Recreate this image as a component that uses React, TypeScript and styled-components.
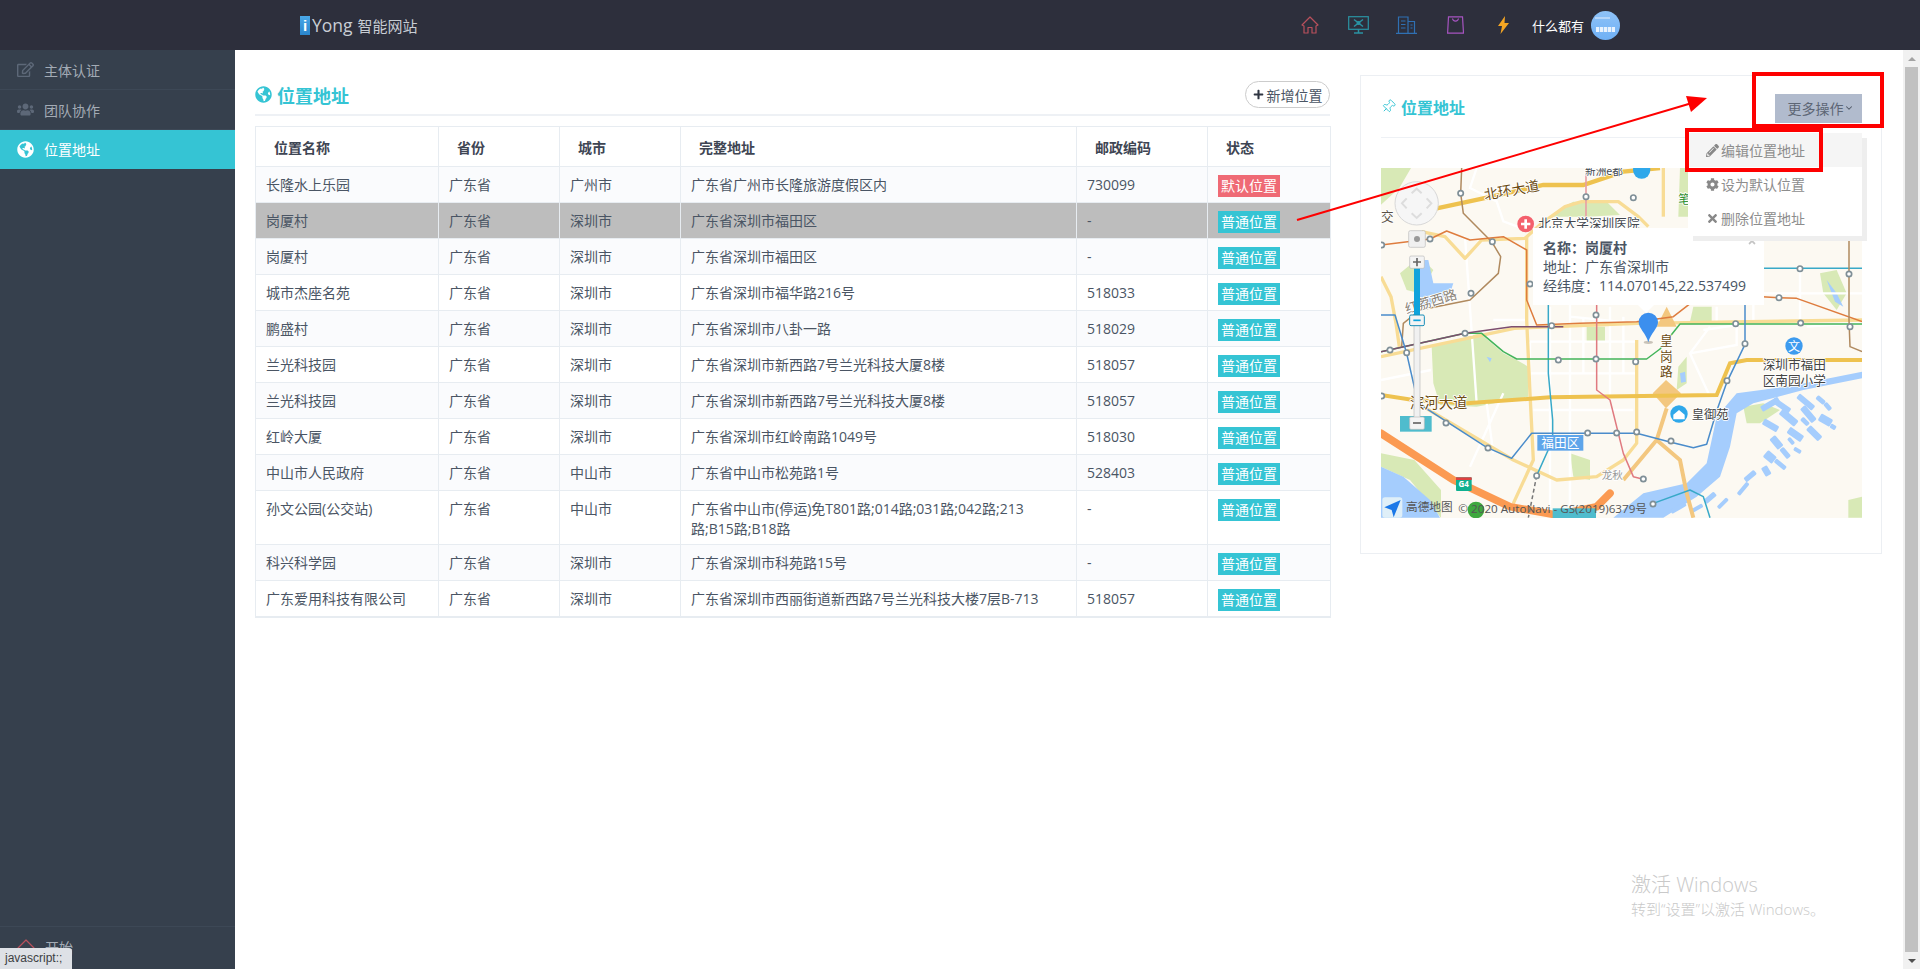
import React from "react";
import styled, { createGlobalStyle } from "styled-components";
import { FaGlobeAmericas, FaPlus, FaPencilAlt, FaCog, FaTimes, FaRegEdit, FaUsers } from "react-icons/fa";
import { Pin, ChevronDown } from "lucide-react";

const FONT = `"Open Sans", "Noto Sans CJK SC", sans-serif`;
const TEAL = "#35c4d4";

const Global = createGlobalStyle`
  html, body { margin: 0; padding: 0; height: 100%; overflow: hidden; background: #fff; }
  body { font-family: ${FONT}; font-size: 14px; color: #4a5564; }
  * { box-sizing: border-box; }
`;

const Page = styled.div`
  position: relative;
  width: 1920px;
  height: 969px;
  display: flex;
  flex-direction: column;
  overflow: hidden;
`;

/* header */
const TopBar = styled.header`
  height: 50px;
  flex: none;
  background: #2d2f3c;
  display: flex;
  align-items: center;
  padding: 0 300px;
`;
const Logo = styled.div`
  display: flex;
  align-items: center;
  color: #c8cdd4;
`;
const LogoMark = styled.span`
  width: 10px;
  height: 19px;
  margin-right: 2px;
  background: linear-gradient(#4aa8e8, #2a85cc);
  color: #fff;
  font: 700 15px/19px "Liberation Sans", sans-serif;
  text-align: center;
`;
const LogoWord = styled.span`
  font-size: 17.5px;
  margin-right: 5px;
`;
const LogoName = styled.span`
  font-size: 15px;
`;
const TopRight = styled.div`
  margin-left: auto;
  display: flex;
  align-items: center;
`;
const TopIcon = styled.span`
  width: 48.5px;
  height: 50px;
  display: flex;
  align-items: center;
  justify-content: center;
`;
const UserName = styled.span`
  margin-left: 4px;
  width: 52px;
  font-size: 13px;
  color: #fff;
  white-space: nowrap;
`;
const Avatar = styled.span`
  position: relative;
  margin-left: 7px;
  width: 29px;
  height: 29px;
  border-radius: 50%;
  background: linear-gradient(#8ec2f7, #6fb0f5);
  overflow: hidden;
  &::before {
    content: "";
    position: absolute;
    left: 4px;
    top: 6px;
    width: 15px;
    height: 2px;
    background: #b5d6fa;
  }
  &::after {
    content: "";
    position: absolute;
    left: 5px;
    top: 16px;
    width: 19px;
    height: 5px;
    background: repeating-linear-gradient(90deg, #e8f2fd 0 3px, #9cc8f7 3px 4px);
  }
`;

/* body */
const Body = styled.div`
  flex: 1;
  min-height: 0;
  display: flex;
`;
const Sidebar = styled.nav`
  width: 235px;
  flex: none;
  background: #36404d;
  display: flex;
  flex-direction: column;
`;
const NavItem = styled.a<{ $active?: boolean; $h?: number }>`
  height: ${(p) => p.$h ?? 40}px;
  display: flex;
  align-items: center;
  padding-left: 17px;
  font-size: 14px;
  color: ${(p) => (p.$active ? "#fff" : "#a3abb5")};
  background: ${(p) => (p.$active ? TEAL : "transparent")};
  border-bottom: 1px solid ${(p) => (p.$active ? TEAL : "#3d4856")};
  svg {
    width: 17px;
    height: 17px;
    color: ${(p) => (p.$active ? "#fff" : "#5d6878")};
    flex: none;
  }
  span {
    margin-left: 10px;
  }
`;
const SideFoot = styled.div`
  margin-top: auto;
  height: 43px;
  border-top: 1px solid #3d4856;
  display: flex;
  align-items: flex-start;
  padding: 12px 0 0 17px;
  color: #a3abb5;
  span {
    margin-left: 10px;
    line-height: 18px;
  }
`;
const Content = styled.main`
  flex: 1;
  min-width: 0;
  background: #fff;
  display: flex;
  align-items: flex-start;
  gap: 30px;
  padding: 25px 21px 0 20px;
`;
const LeftPanel = styled.section`
  width: 1075px;
  flex: none;
  padding-top: 6px;
`;
const PanelHead = styled.div`
  height: 35px;
  display: flex;
  align-items: flex-start;
  justify-content: space-between;
  border-bottom: 2px solid #eef1f5;
  margin-bottom: 10px;
`;
const PageTitle = styled.h2`
  margin: 0;
  display: flex;
  align-items: center;
  gap: 5px;
  height: 27px;
  font-size: 18px;
  font-weight: 700;
  color: ${TEAL};
  svg {
    width: 17px;
    height: 17px;
  }
`;
const AddButton = styled.button`
  width: 85px;
  height: 27px;
  border: 1px solid #ccc;
  border-radius: 14px;
  background: #fff;
  color: #4a5564;
  font: 14px ${FONT};
  padding: 0;
  display: flex;
  align-items: center;
  justify-content: center;
  gap: 3px;
  svg {
    width: 11px;
    height: 11px;
    color: #2f3542;
  }
`;
const Table = styled.table`
  width: 100%;
  table-layout: fixed;
  border-collapse: collapse;
  border: 1px solid #e7ecf1;
  border-bottom-width: 2px;
`;
const HeadCell = styled.th`
  height: 40px;
  padding: 0 0 0 18px;
  text-align: left;
  font-size: 14px;
  font-weight: 700;
  color: #3e4553;
  border: 1px solid #e7ecf1;
  background: #fff;
`;
const Row = styled.tr<{ $selected?: boolean; $odd?: boolean }>`
  background: ${(p) => (p.$selected ? "#bdbdbd" : p.$odd ? "#fafbfd" : "#fff")};
`;
const Cell = styled.td`
  padding: 8px 10px 5px;
  line-height: 20px;
  vertical-align: top;
  border: 1px solid #e7ecf1;
  color: #4a5564;
`;
const Badge = styled.span<{ $default?: boolean }>`
  display: block;
  width: 62px;
  height: 22px;
  line-height: 22px;
  text-align: center;
  color: #fff;
  background: ${(p) => (p.$default ? "#ef6a75" : TEAL)};
`;

/* right panel */
const RightPanel = styled.section`
  position: relative;
  width: 522px;
  flex: none;
  border: 1px solid #eceff3;
  padding: 0 19px 35px 20px;
`;
const CardHead = styled.div`
  height: 62px;
  display: flex;
  align-items: center;
  justify-content: space-between;
  padding: 3px 0 0;
  border-bottom: 1px solid #eef1f5;
  margin-bottom: 30px;
`;
const CardTitle = styled.h3`
  margin: -3px 0 0;
  display: flex;
  align-items: center;
  gap: 5px;
  font-size: 16px;
  font-weight: 600;
  color: ${TEAL};
  svg {
    width: 15px;
    height: 15px;
    transform: rotate(45deg);
  }
`;
const MoreButton = styled.button`
  width: 87px;
  height: 29px;
  border: 0;
  background: #b1bbcd;
  color: #5d6675;
  font: 14px ${FONT};
  padding: 0 0 0 4px;
  display: flex;
  align-items: center;
  justify-content: center;
  svg {
    width: 10px;
    height: 10px;
    color: #4f5866;
  }
`;
const Menu = styled.ul`
  position: absolute;
  z-index: 4;
  right: 19px;
  top: 57px;
  width: 174px;
  height: 103px;
  margin: 0;
  padding: 0;
  list-style: none;
  background: #fff;
  box-shadow: 5px 5px 0 #eee;
  &::before {
    content: "";
    position: absolute;
    right: 10px;
    top: -6px;
    border: 6px solid transparent;
    border-top: 0;
    border-bottom-color: #fff;
  }
`;
const MenuItem = styled.li<{ $hover?: boolean }>`
  height: 34px;
  display: flex;
  align-items: center;
  gap: 2px;
  padding-left: 18px;
  color: #8d8d8d;
  background: ${(p) => (p.$hover ? "#f5f5f5" : "#fff")};
  svg {
    width: 13px;
    height: 13px;
    color: #888;
  }
`;
const MapBox = styled.div`
  position: relative;
  width: 481px;
  height: 350px;
  overflow: hidden;
  background: #fcf9f2;
  svg {
    display: block;
  }
`;
const MapPopup = styled.div`
  position: absolute;
  left: 152px;
  top: 60px;
  width: 231px;
  height: 77px;
  padding: 10px 0 0 10px;
  background: #fff;
  line-height: 19px;
  font-size: 14px;
  color: #4a5564;
  white-space: nowrap;
  &::after {
    content: "";
    position: absolute;
    left: 105px;
    bottom: -8px;
    border: 8px solid transparent;
    border-bottom: 0;
    border-top-color: #fff;
  }
`;
const PopupName = styled.div`
  font-weight: 700;
`;
const PopupClose = styled.span`
  position: absolute;
  left: 214px;
  top: 8px;
  color: #c4c4c4;
  svg {
    display: block;
    width: 10px;
    height: 10px;
  }
`;
const Scrollbar = styled.div`
  width: 17px;
  flex: none;
  background: #f1f1f1;
  display: flex;
  flex-direction: column;
  align-items: center;
`;
const ScrollArrow = styled.span<{ $up?: boolean }>`
  flex: none;
  height: 17px;
  width: 17px;
  display: flex;
  align-items: center;
  justify-content: center;
  &::before {
    content: "";
    border: 4px solid transparent;
    ${(p) => (p.$up ? "border-top: 0; border-bottom-color: #a3a3a3;" : "border-bottom: 0; border-top-color: #505050;")}
  }
`;
const ScrollThumb = styled.span`
  flex: 1;
  width: 13px;
  background: #c1c1c1;
`;

/* overlays */
const RedBox = styled.div<{ $x: number; $y: number; $w: number; $h: number }>`
  position: absolute;
  z-index: 6;
  left: ${(p) => p.$x}px;
  top: ${(p) => p.$y}px;
  width: ${(p) => p.$w}px;
  height: ${(p) => p.$h}px;
  border: 4px solid #fe0000;
`;
const Arrow = styled.svg`
  position: absolute;
  z-index: 6;
  left: 0;
  top: 0;
  pointer-events: none;
`;
const StatusTip = styled.div`
  position: absolute;
  z-index: 7;
  left: 0;
  bottom: 0;
  width: 72px;
  height: 21px;
  padding-left: 5px;
  background: #dee1e6;
  border-top-right-radius: 3px;
  color: #3c4043;
  font: 12px/21px "Liberation Sans", sans-serif;
`;
const Watermark = styled.div`
  position: absolute;
  z-index: 5;
  left: 1631px;
  top: 871px;
  color: #c9c9c9;
  font-weight: 300;
  white-space: nowrap;
`;
const WatermarkBig = styled.div`
  font-size: 20px;
  line-height: 28px;
`;
const WatermarkSmall = styled.div`
  font-size: 15px;
  line-height: 20px;
`;

const MapLabel = styled.text<{ $c?: string }>`
  font-family: "Noto Sans CJK SC", sans-serif;
  fill: ${(p) => p.$c ?? "#5a5146"};
  stroke: #fff;
  stroke-width: 5px;
  paint-order: stroke;
  stroke-linejoin: round;
`;
const MapPlain = styled.text<{ $c?: string }>`
  font-family: "Open Sans", "Noto Sans CJK SC", sans-serif;
  fill: ${(p) => p.$c ?? "#fff"};
`;

const rows: [string, string, string, string, string, boolean?][] = [
  ["长隆水上乐园", "广东省", "广州市", "广东省广州市长隆旅游度假区内", "730099", true],
  ["岗厦村", "广东省", "深圳市", "广东省深圳市福田区", "-"],
  ["岗厦村", "广东省", "深圳市", "广东省深圳市福田区", "-"],
  ["城市杰座名苑", "广东省", "深圳市", "广东省深圳市福华路216号", "518033"],
  ["鹏盛村", "广东省", "深圳市", "广东省深圳市八卦一路", "518029"],
  ["兰光科技园", "广东省", "深圳市", "广东省深圳市新西路7号兰光科技大厦8楼", "518057"],
  ["兰光科技园", "广东省", "深圳市", "广东省深圳市新西路7号兰光科技大厦8楼", "518057"],
  ["红岭大厦", "广东省", "深圳市", "广东省深圳市红岭南路1049号", "518030"],
  ["中山市人民政府", "广东省", "中山市", "广东省中山市松苑路1号", "528403"],
  ["孙文公园(公交站)", "广东省", "中山市", "广东省中山市(停运)免T801路;014路;031路;042路;213路;B15路;B18路", "-"],
  ["科兴科学园", "广东省", "深圳市", "广东省深圳市科苑路15号", "-"],
  ["广东爱用科技有限公司", "广东省", "深圳市", "广东省深圳市西丽街道新西路7号兰光科技大楼7层B-713", "518057"],
];
const columns = ["位置名称", "省份", "城市", "完整地址", "邮政编码", "状态"];
const widths = [183, 121, 121, 396, 131, 123];

const stations = [
  [272, 100], [648, 110], [790, 113], [367, 245], [180, 237], [303, 400], [480, 372], [545, 497], [678, 465],
  [285, 520], [60, 570], [110, 578], [565, 600], [678, 597], [797, 605], [1097, 491], [1292, 489], [1440, 500],
  [1125, 551], [1071, 662], [1290, 326], [1437, 342], [1227, 413], [228, 789], [354, 864], [653, 819], [740, 819],
  [800, 816], [903, 843], [500, 947], [820, 957], [849, 1032], [35, 255], [35, 708],
];
const islands = [
  [1170, 740, 60, 18, -30], [1215, 712, 60, 18, 35], [1290, 700, 60, 18, 40], [1185, 775, 50, 20, 30],
  [1240, 745, 60, 22, 40], [1305, 735, 55, 20, 50], [1355, 760, 40, 24, 30], [1215, 825, 40, 22, 50],
  [1262, 800, 50, 22, 35], [1322, 795, 50, 20, 45], [1370, 725, 26, 14, 50], [1195, 870, 34, 26, 40],
  [1240, 860, 36, 16, 50], [1190, 915, 30, 20, 60], [1220, 895, 40, 14, 40], [1345, 705, 30, 14, 40],
  [1120, 955, 40, 16, -40], [1000, 1020, 40, 16, -40], [900, 1050, 50, 14, -30], [1275, 860, 24, 12, 30],
  [1160, 700, 40, 12, -20], [1100, 1000, 46, 12, -50], [1040, 1040, 40, 12, -45], [1385, 790, 18, 14, 30],
  [1300, 770, 28, 14, 45], [1260, 830, 24, 12, 50], [960, 1050, 40, 12, -30],
];

function HouseIcon() {
  return (
    <svg width="18" height="18" viewBox="0 0 18 18" fill="none" stroke="#b8505c" strokeWidth="1.2" strokeLinejoin="round">
      <path d="M1 9 9 1l8 8-2 1v7h-4v-5.5H7V17H3v-7z" />
    </svg>
  );
}
function MonitorIcon() {
  return (
    <svg width="21" height="18" viewBox="0 0 21 18" fill="none" stroke="#2a93a3" strokeWidth="1.2">
      <rect x=".7" y=".7" width="19.6" height="12.6" />
      <path d="M6 3.5 15 10.5M15 3.5 6 10.5" strokeWidth="1.5" />
      <circle cx="10.5" cy="7" r="1.4" fill="#2a93a3" />
      <path d="M10.5 13.5V16.5M6 17h9" strokeWidth="1.5" />
    </svg>
  );
}
function BuildingIcon() {
  return (
    <svg width="21" height="18" viewBox="0 0 21 18" fill="none" stroke="#2f70b3" strokeWidth="1.2">
      <path d="M2.5 17V1h9.5v16M12 5.5h6.5V17M0 17.4h21" />
      <path d="M5 5h4.5M5 8.5h4.5M5 12h4.5M14.5 9h2M14.5 12h2" />
    </svg>
  );
}
function BagIcon() {
  return (
    <svg width="17" height="18" viewBox="0 0 17 18" fill="none" stroke="#a654c0" strokeWidth="1.2">
      <path d="M1.5 .8h14l1 16.4H.6z" />
      <path d="M5.5 2.5c.5 3.5 5.5 3.5 6 0" />
    </svg>
  );
}
function BoltIcon() {
  return (
    <svg width="13" height="18" viewBox="0 0 13 18">
      <path d="M8 0 1 10h4l-1.5 8L12 7H7.5z" fill="#f5a623" />
    </svg>
  );
}

function MapDrawing() {
  return (
    <svg width="481" height="350" viewBox="33 24 1443 1050">
      <rect x="33" y="24" width="1443" height="1050" fill="#fcf9f2" />
      <g fill="#d8e9b6">
        <path d="M33 24h90l-35 60-55 50z" />
        <path d="M185 560l145-40 70 60 40 20 35 20v90l-155 30-110-5-20-65z" />
        <path d="M90 340l60-50 40 40-40 70-40-10z" />
        <path d="M540 170l40-30 30-15h100l40 40-100 5z" />
        <path d="M930 24h55v146h-60z" />
        <path d="M925 620l25-30v80l-30 20z" />
        <path d="M1120 740l60-10 50 20-60 40h-40z" />
        <path d="M33 880l100 20 80 90v83L120 960 33 920z" />
        <path d="M1350 340l50-10 30 70-30 50-40-50z" />
        <path d="M600 880l60 20v60l-50-10z" />
        <path d="M970 440h55v45h-65z" />
        <path d="M650 500h55v45h-55zM1435 1020l41-10v63h-41z" />
      </g>
      <g fill="#a5cdfd">
        <path d="M150 300h25l15 70h60l-10 30-50 30-40 10-10-40z" />
        <path d="M33 920l67 30 80 70 30 53H33z" />
        <path d="M730 1073l90-73 130-30 60-60 30-140 60-70 150-20 226-45v20l-176 35-150 40-50 30-20 100-30 90-70 60-100 63z" />
        <path d="M350 590l15 5-5 12zM930 640l15-5 3 30-15 3zM1370 360l30 40 20 40-25-15z" />
        {islands.map(([x, y, w, h, r], i) => (
          <rect key={i} x={x} y={y} width={w} height={h} rx="4" transform={`rotate(${r} ${x} ${y})`} />
        ))}
      </g>
      <g fill="none" stroke="#fff" strokeWidth="7">
        <path d="M320 24l-20 60 80 40 20 60 80 30M285 230l35 500M540 440v600M600 430v640M720 440v270M600 470l200 20M480 545h320M480 640h320M480 545v160M640 470v170M760 470v170" />
        <path d="M33 660l150-30M370 480h100M1000 510l100-15v60l-140 25M1180 400h296M1290 330v160M1310 500l160-10M400 700l-100 220M1020 500l-60 80 60 130M490 750h300M600 760v300M350 730l20 150M1040 440v50M1150 420v60" />
      </g>
      <g fill="none" stroke="#f8dc95" strokeWidth="10" strokeLinejoin="round">
        <path d="M470 230v250l10 220 10 200-60 130" />
        <path d="M800 540v310l-40 50-80 50-120 10-130-60-270-160" />
        <path d="M880 24v146" />
        <path d="M33 590l400-85 370-15 673-10" />
        <path d="M155 215l70 15 60 65 50-55 130-5 50-45 70-50 50-15h110l60 45 30 30" />
        <path d="M33 350l30 60 15 80 10 70" />
      </g>
      <g fill="#f3c77f">
        <path d="M888 660l45 40-45 45-40-45z" />
        <path d="M890 440l-30 60h60z" />
      </g>
      <path d="M890 745l-30 95M760 960l100-120 70 60 20 100 20 73" fill="none" stroke="#f3c77f" strokeWidth="12" />
      <path d="M200 145l140-30 180-40h120l120-40 110-11" fill="none" stroke="#eec24f" strokeWidth="13" />
      <path d="M33 705l97 15 160 10 250-18 500-7 40-95 50-10h346" fill="none" stroke="#eec24f" strokeWidth="12" />
      <path d="M33 820l217 140 170 80 140 25 120-25 40-40" fill="none" stroke="#fb9a52" strokeWidth="23" strokeLinecap="round" />
      <g fill="none" strokeWidth="4.5" strokeLinejoin="round">
        <path d="M648 24v150" stroke="#e8a0a4" strokeWidth="5" />
        <path d="M275 24l-3 76 8 60 85 85 27 45-7 50-85 80-150 30-50 40-5 70" stroke="#b08a5f" />
        <path d="M33 255l147-18 50-24 70 27 100-10 70 40v150l30 75 130-5 170-5 110-15 90-70 227 13 53 2 196 70" stroke="#de7c3e" />
        <path d="M535 430v210l13 140v60l-48 107" stroke="#38a9c8" />
        <path d="M680 430v260l40 30 40 160 30 70 30 8" stroke="#e07a80" />
        <path d="M33 575l252-55h50l65 55 40 22h390l40-30 60-75h546" stroke="#43b45a" />
        <path d="M33 575l252-55 140-20h155" stroke="#7d4e6f" />
        <path d="M33 465h42l35 115 25 110 25 50 190 122 75 33 60-75h315l100 26 70 17 40-10 30-100 30-85 55-115V430" stroke="#4a8ccb" />
        <path d="M1180 325h296M850 1030l110-40 40 20 20 63" stroke="#38a9c8" />
        <path d="M1437 230v250l3 80 36 15" stroke="#b08a5f" />
        <path d="M500 947l-25 126" stroke="#777" strokeDasharray="12 8" />
      </g>
      {stations.map(([x, y], i) => (
        <circle key={i} cx={x} cy={y} r="8" fill="#fff" stroke="#7f8f97" strokeWidth="5" />
      ))}

      <circle cx="815" cy="30" r="26" fill="#2fa8ea" />
      <circle cx="467" cy="192" r="25" fill="#f4606c" />
      <path d="M467 178v28M453 192h28" stroke="#fff" strokeWidth="8" />
      <circle cx="1272" cy="558" r="26" fill="#3d9bef" />
      <MapPlain x="1272" y="572" fontSize="36" textAnchor="middle">文</MapPlain>
      <circle cx="927" cy="762" r="26" fill="#2fa8ea" />
      <path d="M910 764l17-14 17 14v14h-34z" fill="#fff" />

      <MapLabel x="505" y="203" fontSize="38" $c="#44484f">北京大学深圳医院</MapLabel>
      <MapLabel x="645" y="45" fontSize="32" $c="#44484f">新洲e都</MapLabel>
      <MapLabel x="33" y="182" fontSize="38">交</MapLabel>
      <MapLabel x="345" y="120" fontSize="42" $c="#6b4b12" transform="rotate(-10 345 120)">北环大道</MapLabel>
      <MapLabel x="110" y="462" fontSize="40" $c="#8a8378" transform="rotate(-17 110 462)">红荔西路</MapLabel>
      <MapLabel x="120" y="745" fontSize="43" $c="#6b4b12">滨河大道</MapLabel>
      <MapLabel x="870" y="556" fontSize="38" $c="#6b4b12">皇</MapLabel>
      <MapLabel x="870" y="602" fontSize="38" $c="#6b4b12">岗</MapLabel>
      <MapLabel x="870" y="648" fontSize="38" $c="#6b4b12">路</MapLabel>
      <MapLabel x="925" y="132" fontSize="36" $c="#2f8f2f">笔</MapLabel>
      <MapLabel x="1178" y="626" fontSize="38" $c="#444">深圳市福田</MapLabel>
      <MapLabel x="1178" y="674" fontSize="38" $c="#444">区南园小学</MapLabel>
      <MapLabel x="965" y="776" fontSize="37" $c="#444">皇御苑</MapLabel>
      <MapLabel x="695" y="958" fontSize="32" $c="#999">龙秋</MapLabel>

      <rect x="502" y="825" width="138" height="47" fill="#5ea5ea" />
      <MapPlain x="571" y="862" fontSize="38" textAnchor="middle">福田区</MapPlain>
      <rect x="90" y="768" width="95" height="47" fill="#4fbccd" />
      <rect x="548" y="1045" width="130" height="30" fill="#4fbccd" />
      <rect x="258" y="952" width="47" height="41" rx="3" fill="#0fb090" />
      <rect x="258" y="952" width="47" height="8" fill="#e04040" />
      <MapPlain x="281" y="982" fontSize="24" fontWeight="700" textAnchor="middle">G4</MapPlain>
      <circle cx="318" cy="1050" r="25" fill="#3fa83f" />

      <rect x="37" y="1012" width="60" height="61" rx="8" fill="#dfeff8" />
      <path d="M92 1020 43 1042l22 8 6 22z" fill="#1a78e8" />
      <MapPlain x="108" y="1053" fontSize="35" $c="#555">高德地图</MapPlain>
      <MapPlain x="265" y="1060" fontSize="35" $c="#555">© 2020 AutoNavi - GS(2019)6379号</MapPlain>

      <ellipse cx="835" cy="547" rx="14" ry="5" fill="#c9c3b8" />
      <path d="M835 547C828 520 806 505 806 487a29 29 0 0 1 58 0c0 18-22 33-29 60z" fill="#3c8fee" />

      <circle cx="140" cy="130" r="65" fill="#f6f6f6" stroke="#d8d8d8" strokeWidth="3" />
      <path d="M125 100l15-14 15 14M125 160l15 14 15-14M110 115l-14 15 14 15M170 115l14 15-14 15" fill="none" stroke="#ddd" strokeWidth="6" />
      <rect x="116" y="212" width="50" height="50" rx="5" fill="#f0f0f0" stroke="#bbb" strokeWidth="2" />
      <circle cx="141" cy="237" r="9" fill="#999" />
      <rect x="132" y="325" width="18" height="140" fill="#0fa3dc" />
      <rect x="132" y="497" width="18" height="275" fill="#f1f1f1" stroke="#bbb" strokeWidth="2" />
      <rect x="119" y="288" width="44" height="37" rx="4" fill="#f4f4f4" stroke="#bbb" strokeWidth="2" />
      <path d="M141 294v25M129 306h24" stroke="#666" strokeWidth="5" />
      <rect x="119" y="465" width="44" height="32" rx="4" fill="#f4f4f4" stroke="#1a8fb8" strokeWidth="3" />
      <path d="M130 481h22" stroke="#0fa3dc" strokeWidth="5" />
      <rect x="119" y="771" width="44" height="37" rx="4" fill="#f4f4f4" stroke="#bbb" strokeWidth="2" />
      <path d="M129 789h24" stroke="#666" strokeWidth="5" />
    </svg>
  );
}

export default function App() {
  return (
    <Page>
      <Global />
      <TopBar>
        <Logo>
          <LogoMark>i</LogoMark>
          <LogoWord>Yong</LogoWord>
          <LogoName>智能网站</LogoName>
        </Logo>
        <TopRight>
          <TopIcon><HouseIcon /></TopIcon>
          <TopIcon><MonitorIcon /></TopIcon>
          <TopIcon><BuildingIcon /></TopIcon>
          <TopIcon><BagIcon /></TopIcon>
          <TopIcon><BoltIcon /></TopIcon>
          <UserName>什么都有</UserName>
          <Avatar />
        </TopRight>
      </TopBar>
      <Body>
        <Sidebar>
          <NavItem><FaRegEdit /><span>主体认证</span></NavItem>
          <NavItem><FaUsers /><span>团队协作</span></NavItem>
          <NavItem $active $h={39}><FaGlobeAmericas /><span>位置地址</span></NavItem>
          <SideFoot>
            <HouseIcon />
            <span>开始</span>
          </SideFoot>
        </Sidebar>
        <Content>
          <LeftPanel>
            <PanelHead>
              <PageTitle><FaGlobeAmericas />位置地址</PageTitle>
              <AddButton><FaPlus />新增位置</AddButton>
            </PanelHead>
            <Table>
              <colgroup>
                {widths.map((w, i) => <col key={i} style={{ width: w }} />)}
              </colgroup>
              <thead>
                <tr>{columns.map((c) => <HeadCell key={c}>{c}</HeadCell>)}</tr>
              </thead>
              <tbody>
                {rows.map((r, i) => (
                  <Row key={i} $selected={i === 1} $odd={i % 2 === 0}>
                    <Cell>{r[0]}</Cell>
                    <Cell>{r[1]}</Cell>
                    <Cell>{r[2]}</Cell>
                    <Cell>{r[3]}</Cell>
                    <Cell>{r[4]}</Cell>
                    <Cell><Badge $default={r[5]}>{r[5] ? "默认位置" : "普通位置"}</Badge></Cell>
                  </Row>
                ))}
              </tbody>
            </Table>
          </LeftPanel>
          <RightPanel>
            <CardHead>
              <CardTitle><Pin strokeWidth={1.5} />位置地址</CardTitle>
              <MoreButton>更多操作<ChevronDown strokeWidth={2.5} /></MoreButton>
            </CardHead>
            <Menu>
              <MenuItem $hover><FaPencilAlt />编辑位置地址</MenuItem>
              <MenuItem><FaCog />设为默认位置</MenuItem>
              <MenuItem><FaTimes />删除位置地址</MenuItem>
            </Menu>
            <MapBox>
              <MapDrawing />
              <MapPopup>
                <PopupClose><FaTimes /></PopupClose>
                <PopupName>名称：岗厦村</PopupName>
                <div>地址：广东省深圳市</div>
                <div>经纬度：114.070145,22.537499</div>
              </MapPopup>
            </MapBox>
          </RightPanel>
        </Content>
        <Scrollbar>
          <ScrollArrow $up />
          <ScrollThumb />
          <ScrollArrow />
        </Scrollbar>
      </Body>
      <RedBox $x={1752} $y={72} $w={132} $h={56} />
      <RedBox $x={1685} $y={128} $w={138} $h={44} />
      <Arrow width="1920" height="969" viewBox="0 0 1920 969">
        <path d="M1297 220 1692 103" stroke="#fe0000" strokeWidth="2" fill="none" />
        <path d="M1707 98 1686 96 1691 112z" fill="#fe0000" />
      </Arrow>
      <Watermark>
        <WatermarkBig>激活 Windows</WatermarkBig>
        <WatermarkSmall>转到“设置”以激活 Windows。</WatermarkSmall>
      </Watermark>
      <StatusTip>javascript:;</StatusTip>
    </Page>
  );
}
